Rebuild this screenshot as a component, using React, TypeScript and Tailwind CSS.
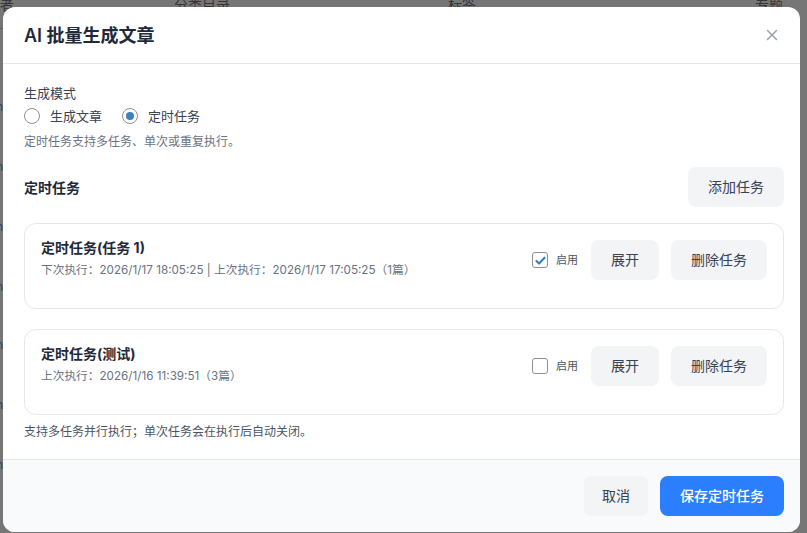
import { X } from "lucide-react";

const FONT = { fontFamily: 'Inter, "Noto Sans CJK SC", sans-serif' };

interface Task {
  title: string;
  meta: string;
  enabled: boolean;
}

const TASKS: Task[] = [
  {
    title: "定时任务(任务 1)",
    meta: "下次执行：2026/1/17 18:05:25 | 上次执行：2026/1/17 17:05:25（1篇）",
    enabled: true,
  },
  {
    title: "定时任务(测试)",
    meta: "上次执行：2026/1/16 11:39:51（3篇）",
    enabled: false,
  },
];

function Radio({ checked, label }: { checked: boolean; label: string }) {
  return (
    <label className="flex items-center gap-[10px]">
      <span className="flex h-4 w-4 items-center justify-center rounded-full border border-[#8f8f8f] bg-white">
        {checked && <span className="h-2 w-2 rounded-full bg-[#3b82c4]" />}
      </span>
      <span className="text-[13px] leading-5 text-gray-700">{label}</span>
    </label>
  );
}

function Checkbox({ checked }: { checked: boolean }) {
  return (
    <span className="flex h-4 w-4 items-center justify-center rounded-[3px] border border-[#8f8f8f] bg-white">
      {checked && (
        <svg viewBox="0 0 16 16" className="h-[13px] w-[13px]">
          <path d="M3 8.5l3.2 3.2L13 4.5" fill="none" stroke="#2f7fd0" strokeWidth={2.6} strokeLinecap="round" strokeLinejoin="round" />
        </svg>
      )}
    </span>
  );
}

function TaskCard({ task }: { task: Task }) {
  return (
    <div className="flex h-[86px] items-start justify-between rounded-xl border border-gray-200 bg-white px-4 pt-[14px]">
      <div>
        <div className="text-[14px] font-bold leading-5 text-gray-800">{task.title}</div>
        <div className="mt-1 text-[11.7px] leading-4 text-gray-500">{task.meta}</div>
      </div>
      <div className="mt-[2px] flex items-center">
        <Checkbox checked={task.enabled} />
        <span className="ml-2 text-[11px] text-gray-600">启用</span>
        <button className="ml-[13px] h-10 rounded-lg bg-gray-100 px-5 text-sm text-gray-700">展开</button>
        <button className="ml-3 h-10 rounded-lg bg-gray-100 px-5 text-sm text-gray-700">删除任务</button>
      </div>
    </div>
  );
}

export default function App() {
  const rowMarks = [107, 167, 227, 287, 345, 405, 465];
  return (
    <div className="relative h-[533px] w-[807px] overflow-hidden bg-[#767676]" style={FONT}>
      {/* page behind the overlay */}
      <div className="absolute left-0 top-[-6px] text-[14px] text-[#353535]">者</div>
      <div className="absolute left-[174px] top-[-6px] text-[14px] text-[#353535]">分类目录</div>
      <div className="absolute left-[448px] top-[-6px] text-[14px] text-[#353535]">标签</div>
      <div className="absolute left-[755px] top-[-6px] text-[14px] text-[#353535]">专题</div>
      <div className="absolute left-0 top-[28px] h-px w-[10px] bg-[#5e5e5e]" />
      {rowMarks.map((y) => (
        <div key={y} className="absolute left-[-4px] text-[12px] leading-none text-[#28466a]" style={{ top: y - 6 }}>
          n
        </div>
      ))}

      {/* modal */}
      <div className="absolute left-[3px] top-[7px] flex h-[525px] w-[797px] flex-col overflow-hidden rounded-xl bg-white">
        <div className="flex h-[57px] items-center justify-between border-b border-gray-200 pl-[21px] pr-[19px]">
          <h2 className="text-[18px] font-semibold text-gray-800">AI 批量生成文章</h2>
          <X className="h-[18px] w-[18px] text-gray-400" strokeWidth={2} />
        </div>

        <div className="flex-1 pl-[21px] pr-[16px] pt-5">
          <div className="text-[13px] leading-[18px] text-gray-700">生成模式</div>
          <div className="mt-1 flex items-center gap-5">
            <Radio checked={false} label="生成文章" />
            <Radio checked label="定时任务" />
          </div>
          <p className="mt-2 text-xs leading-4 text-gray-500">定时任务支持多任务、单次或重复执行。</p>

          <div className="mt-[17px] flex items-center justify-between">
            <div className="text-[14px] font-bold text-gray-800">定时任务</div>
            <button className="h-10 rounded-lg bg-gray-100 px-5 text-sm text-gray-700">添加任务</button>
          </div>

          <div className="mt-4 flex flex-col gap-5">
            {TASKS.map((t) => (
              <TaskCard key={t.title} task={t} />
            ))}
          </div>

          <p className="mt-[9px] text-xs leading-4 text-gray-600">支持多任务并行执行；单次任务会在执行后自动关闭。</p>
        </div>

        <div className="flex h-[73px] items-center justify-end gap-3 border-t border-gray-200 bg-gray-50 pr-[16px]">
          <button className="h-10 rounded-lg bg-gray-100 px-[18px] text-sm text-gray-700">取消</button>
          <button className="h-10 rounded-lg bg-blue-500 px-5 text-sm font-medium text-white">保存定时任务</button>
        </div>
      </div>
    </div>
  );
}
